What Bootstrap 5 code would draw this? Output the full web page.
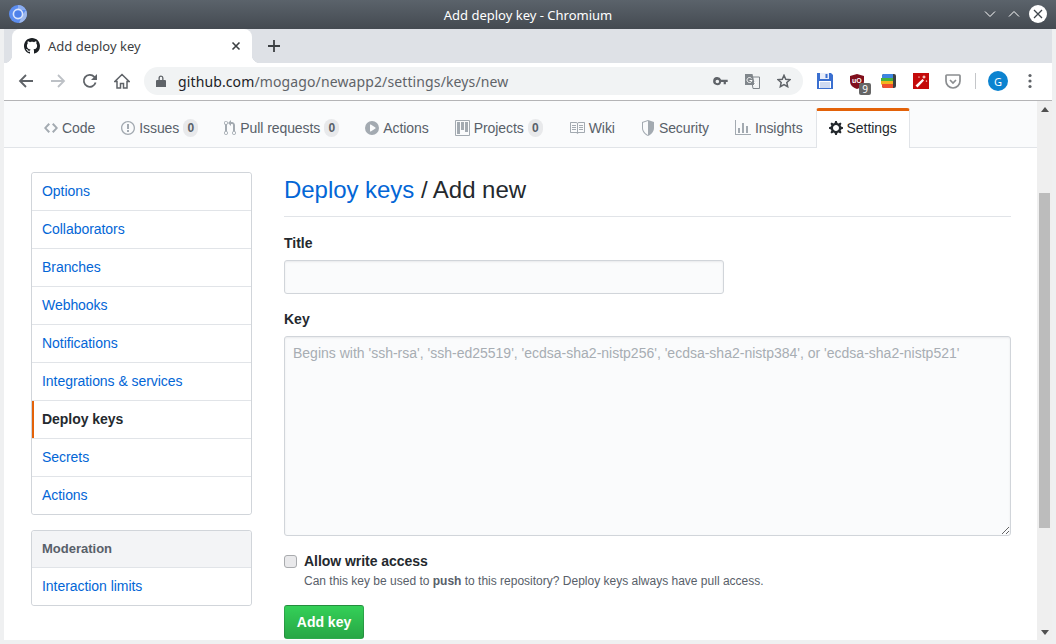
<!DOCTYPE html>
<html lang="en">
<head>
  <meta charset="UTF-8" />
  <meta name="viewport" content="width=device-width, initial-scale=1.0" />
  <title>Add deploy key - Chromium</title>
  <link href="https://cdn.jsdelivr.net/npm/bootstrap@5.3.0/dist/css/bootstrap.min.css" rel="stylesheet" />
  <style>
    html, body {
      height: 644px;
      overflow: hidden;
      background: #eff0f1;
    }
    body {
      font-family: "Liberation Sans", Arial, sans-serif;
      font-size: 14px;
      color: #24292e;
    }
    /* browser chrome */
    .title-row {
      height: 29px;
      background: linear-gradient(#5b636b, #444a51);
      color: #fff;
      font: 13px "Noto Sans", sans-serif;
    }
    .app-logo { left: 8px; top: 4px; }
    .win-btns { right: 6px; top: 4px; }
    .win-btn { width: 24px; height: 20px; }
    .shell { padding: 0 4px 4px; height: 615px; }
    .tab-row { height: 34px; background: #dee1e6; padding-left: 8px; }
    .tab-page {
      width: 240px;
      background: #fff;
      border-radius: 8px 8px 0 0;
      padding: 0 9px 0 12px;
      color: #3c4043;
      font: 13px "Noto Sans", sans-serif;
    }
    .tab-page::before, .tab-page::after {
      content: "";
      position: absolute;
      bottom: 0;
      width: 8px;
      height: 8px;
    }
    .tab-page::before { left: -8px; background: radial-gradient(circle at 0 0, transparent 8px, #fff 8.5px); }
    .tab-page::after { right: -8px; background: radial-gradient(circle at 100% 0, transparent 8px, #fff 8.5px); }
    .tab-title { margin-left: 8px; }
    .new-tab { margin-left: 14px; }
    .tool-row {
      height: 38px;
      background: #fff;
      border-bottom: 1px solid #b4b4b6;
      padding: 0 0 1px 6px;
    }
    .tool-btn { width: 32px; height: 32px; flex: none; }
    .omni {
      width: 659px;
      height: 28px;
      background: #f1f3f4;
      border-radius: 14px;
      margin: 0 6px;
      padding: 0 3px 0 10px;
      font: 14px "Noto Sans", sans-serif;
      letter-spacing: .12px;
      color: #5f6368;
    }
    .omni-host { color: #202124; }
    .omni-url { margin-left: 10px; }
    .tool-sep { width: 1px; height: 16px; background: #c4c6c9; margin: 0 6px 0 6px; }
    .avatar {
      width: 20px;
      height: 20px;
      border-radius: 50%;
      background: #0c83d0;
      color: #fff;
      font: 11px "Noto Sans", sans-serif;
    }
    .ublock-tag {
      left: 18px;
      top: 18px;
      width: 12px;
      height: 12px;
      background: #666;
      color: #fff;
      border-radius: 2px;
      font: 10px/12px "Noto Sans", sans-serif;
      text-align: center;
    }
    .ublock-mark { left: 11px; top: 11px; color: #fff; font: bold 7px/10px "Liberation Sans", sans-serif; }
    /* page */
    .view { height: 539px; }
    .page-pane { width: 1033px; background: #fff; overflow: hidden; }
    .repo-nav {
      height: 47px;
      background: #fafbfc;
      border-bottom: 1px solid #e1e4e8;
      padding: 7px 0 0 27px;
    }
    .repo-nav .nav-link {
      height: 40px;
      padding: 0 13px;
      color: #586069;
      font-size: 14px;
      letter-spacing: -.07px;
      gap: 4px;
    }
    .repo-nav svg { fill: #a3aab1; fill-rule: evenodd; }
    .repo-nav .nav-link.is-current {
      padding: 0 12px 3px;
      background: #fff;
      color: #24292e;
      border: 1px solid #e1e4e8;
      border-top: 3px solid #e36209;
      border-bottom: 0;
      border-radius: 3px 3px 0 0;
    }
    .repo-nav .is-current svg { fill: #24292e; }
    .count {
      min-width: 15px;
      height: 18px;
      padding: 0 4px;
      background: rgba(27, 31, 35, .08);
      border-radius: 9px;
      color: #586069;
      font-size: 12px;
      font-weight: 600;
      line-height: 18px;
      text-align: center;
    }
    .settings-wrap { padding: 24px 26px 0 27px; gap: 32px; }
    .side { width: 221px; flex: none; }
    .side-list { border: 1px solid #d1d5da; border-radius: 3px; margin-bottom: 15px; }
    .side-list .list-group-item {
      padding: 8px 10px;
      font-size: 14px;
      line-height: 21px;
      letter-spacing: -.05px;
      color: #0366d6;
      border-width: 0 0 1px;
      border-color: #e1e4e8;
    }
    .side-list .list-group-item:last-child { border-bottom: 0; }
    .side-list .is-current {
      font-weight: 600;
      color: #24292e;
      box-shadow: inset 2px 0 #e36209;
    }
    .side-list .side-head {
      padding: 7px 10px;
      height: 37px;
      background: #f3f4f6;
      color: #586069;
      font-size: 13px;
      letter-spacing: 0;
      font-weight: 600;
    }
    .main-col { width: 727px; }
    .sub-head {
      border-bottom: 1px solid #e1e4e8;
      padding-bottom: 8px;
      margin-bottom: 16px;
      font-size: 24px;
      line-height: 36px;
      font-weight: 400;
      letter-spacing: -.04px;
    }
    .sub-head a { color: #0366d6; text-decoration: none; }
    .field-label { font-weight: 600; font-size: 14px; line-height: 21px; margin-bottom: 6px; }
    .form-control.gh-input {
      background: #fafbfc;
      border: 1px solid #d1d5da;
      border-radius: 3px;
      font-size: 14px;
      color: #24292e;
      box-shadow: inset 0 1px 2px rgba(27, 31, 35, .075);
    }
    .gh-title { width: 440px; height: 34px; margin-bottom: 15px; }
    .gh-key { width: 727px; height: 200px; padding: 6px 8px; line-height: 20px; }
    .gh-key::placeholder { color: #a7adb3; opacity: 1; }
    .write-check { margin: 17px 0 0; padding-left: 20px; min-height: 0; }
    .write-check .form-check-input {
      width: 13px;
      height: 13px;
      margin: 2px 0 0 -20px;
      background-color: #e9e9eb;
      border: 1px solid #a9abae;
      border-radius: 3px;
    }
    .write-check label { font-weight: 600; line-height: 17px; display: block; letter-spacing: -.04px; }
    .write-hint { font-size: 12px; color: #586069; line-height: 18px; margin-top: 2px; }
    .write-hint b { font-weight: 600; }
    .btn.add-btn {
      margin-top: 15px;
      width: 80px;
      height: 34px;
      padding: 0;
      border: 1px solid rgba(27, 31, 35, .2);
      border-radius: 3px;
      background: linear-gradient(#34d058, #28a745);
      color: #fff;
      font-size: 14px;
      font-weight: 600;
    }
    .scroll-rail {
      width: 15px;
      flex: none;
      background: #efefef;
      padding-top: 6px;
    }
    .scroll-thumb { width: 11px; height: 335px; margin: 81px 2px 102px; background: #bcbcbc; }
    .scroll-up, .scroll-down { display: block; margin: 0 auto; }
  </style>
</head>
<body>
  <div class="title-row position-relative d-flex align-items-center justify-content-center">
    <svg class="app-logo position-absolute" width="20" height="20" viewBox="0 0 20 20">
      <circle cx="10" cy="10" r="9" fill="#5c8def" />
      <path d="M10 1a9 9 0 0 1 8 5h-8z" fill="#8badf0" />
      <path d="M18 6a9 9 0 0 1-7 13l3-7z" fill="#9db7ea" />
      <circle cx="10" cy="10" r="4.6" fill="none" stroke="#dbe5fb" stroke-width="1.6" />
      <circle cx="10" cy="10" r="3.2" fill="#4e81ea" />
    </svg>
    <span>Add deploy key - Chromium</span>
    <div class="win-btns position-absolute d-flex align-items-center">
      <div class="win-btn d-flex align-items-center justify-content-center">
        <svg width="12" height="8" viewBox="0 0 12 8"><path d="M1 1.5l5 5 5-5" fill="none" stroke="#fff" /></svg>
      </div>
      <div class="win-btn d-flex align-items-center justify-content-center">
        <svg width="12" height="8" viewBox="0 0 12 8"><path d="M1 6.5l5-5 5 5" fill="none" stroke="#fff" /></svg>
      </div>
      <div class="win-btn d-flex align-items-center justify-content-center">
        <svg width="18" height="18" viewBox="0 0 18 18"><circle cx="9" cy="9" r="9" fill="#fff" /><path d="M5 5l8 8M13 5l-8 8" stroke="#3f454b" stroke-width="1.3" /></svg>
      </div>
    </div>
  </div>

  <div class="shell">
    <div class="tab-row d-flex align-items-center">
      <div class="tab-page position-relative d-flex align-items-center align-self-stretch">
        <svg width="16" height="16" viewBox="0 0 16 16" fill="#1b1f23"><path d="M8 0C3.58 0 0 3.58 0 8c0 3.54 2.29 6.53 5.47 7.59.4.07.55-.17.55-.38 0-.19-.01-.82-.01-1.49-2.01.37-2.53-.49-2.69-.94-.09-.23-.48-.94-.82-1.13-.28-.15-.68-.52-.01-.53.63-.01 1.08.58 1.23.82.72 1.21 1.87.87 2.33.66.07-.52.28-.87.51-1.07-1.78-.2-3.64-.89-3.64-3.95 0-.87.31-1.59.82-2.15-.08-.2-.36-1.02.08-2.12 0 0 .67-.21 2.2.82.64-.18 1.32-.27 2-.27.68 0 1.36.09 2 .27 1.53-1.04 2.2-.82 2.2-.82.44 1.1.16 1.92.08 2.12.51.56.82 1.27.82 2.15 0 3.07-1.87 3.75-3.65 3.95.29.25.54.73.54 1.48 0 1.07-.01 1.93-.01 2.2 0 .21.15.46.55.38A8.013 8.013 0 0016 8c0-4.42-3.58-8-8-8z" /></svg>
        <span class="tab-title flex-grow-1">Add deploy key</span>
        <svg width="14" height="14" viewBox="0 0 14 14"><path d="M3.5 3.5l7 7M10.5 3.5l-7 7" stroke="#3c4043" stroke-width="1.6" /></svg>
      </div>
      <svg class="new-tab" width="16" height="16" viewBox="0 0 16 16"><path d="M8 2v12M2 8h12" stroke="#3c4043" stroke-width="1.8" /></svg>
    </div>

    <div class="tool-row d-flex align-items-center">
      <div class="tool-btn d-flex align-items-center justify-content-center">
        <svg width="16" height="16" viewBox="0 0 16 16"><path d="M15 8H2M8 2L2 8l6 6" fill="none" stroke="#5f6368" stroke-width="1.8" /></svg>
      </div>
      <div class="tool-btn d-flex align-items-center justify-content-center">
        <svg width="16" height="16" viewBox="0 0 16 16"><path d="M1 8h13M8 2l6 6-6 6" fill="none" stroke="#bdc1c6" stroke-width="1.8" /></svg>
      </div>
      <div class="tool-btn d-flex align-items-center justify-content-center">
        <svg width="16" height="16" viewBox="0 0 16 16"><path d="M13.6 9.5A6 6 0 1 1 12.3 3.8L14.5 6" fill="none" stroke="#5f6368" stroke-width="1.8" /><path d="M15 1v6H9z" fill="#5f6368" /></svg>
      </div>
      <div class="tool-btn d-flex align-items-center justify-content-center">
        <svg width="16" height="16" viewBox="0 0 16 16"><path d="M8 1.500L.9 8.500H3V15h3.500v-4.500h3V15H13V8.500h2.100z" fill="none" stroke="#5f6368" stroke-width="1.500" /></svg>
      </div>
      <div class="omni d-flex align-items-center">
        <svg width="14" height="14" viewBox="0 0 14 14" fill="#5f6368"><path d="M3 6h8a1 1 0 0 1 1 1v6H2V7a1 1 0 0 1 1-1zM4.500 6V4a2.500 2.500 0 0 1 5 0v2H8.200V4a1.200 1.200 0 0 0-2.400 0v2z" /></svg>
        <span class="omni-url flex-grow-1"><span class="omni-host">github.com</span>/mogago/newapp2/settings/keys/new</span>
        <div class="tool-btn d-flex align-items-center justify-content-center">
          <svg width="15" height="9" viewBox="0 0 16 10" fill="#5f6368"><path d="M4.500 0a4.500 4.500 0 0 1 4.200 3H16v2.500h-2V8h-2.500V5.500H8.700A4.500 4.500 0 1 1 4.500 0zm0 3a2 2 0 1 0 0 4 2 2 0 0 0 0-4z" /></svg>
        </div>
        <div class="tool-btn d-flex align-items-center justify-content-center">
          <svg width="16" height="16" viewBox="0 0 16 16"><path d="M7 4h8.500v11.500H9z" fill="#f1f3f4" stroke="#80868b" /><path d="M1 1h7.500L11 12H1z" fill="#80868b" /><path d="M7.500 5.500A2.500 2.500 0 1 0 8 7.500H5.500M10 9l3 3.500M13 9l-3.500 3.500" fill="none" stroke="#fff" /></svg>
        </div>
        <div class="tool-btn d-flex align-items-center justify-content-center">
          <svg width="14" height="14" viewBox="0 0 16 16"><path d="M8 1.500l2 4.500 4.800.5-3.600 3.200 1 4.800L8 12l-4.200 2.500 1-4.800L1.200 6.500 6 6z" fill="none" stroke="#5f6368" stroke-width="1.700" /></svg>
        </div>
      </div>
      <div class="tool-btn d-flex align-items-center justify-content-center">
        <svg width="16" height="16" viewBox="0 0 16 16"><path d="M0 0h14l2 2v14H0z" fill="#3a6fd0" /><path d="M3 0h9v6H3z" fill="#e9eefa" /><path d="M8.500 1h2v4h-2z" fill="#3a6fd0" /><path d="M2 8h12v7H2z" fill="#fff" /><path d="M3 10h10M3 12h10M3 14h10" stroke="#9db5e4" /></svg>
      </div>
      <div class="tool-btn position-relative">
        <svg class="position-absolute top-0 start-0" width="32" height="32" viewBox="0 0 32 32"><path d="M16 9l7 2v5c0 5-4 7-7 8-3-1-7-3-7-8v-5z" fill="#800f1d" /></svg>
        <span class="ublock-mark position-absolute">uO</span>
        <span class="ublock-tag position-absolute">9</span>
      </div>
      <div class="tool-btn d-flex align-items-center justify-content-center">
        <svg width="16" height="16" viewBox="0 0 16 16"><rect x="1" y="1" width="14" height="14" rx="2" fill="#3d4043" /><path d="M1 3a2 2 0 0 1 2-2h9v4H1z" fill="#3d85e0" /><path d="M0 5h12v4H0z" fill="#46b13c" /><path d="M0 8h12v3.500H0z" fill="#f2b51e" /><path d="M1 11h11v4H3a2 2 0 0 1-2-2z" fill="#ef4f2f" /></svg>
      </div>
      <div class="tool-btn d-flex align-items-center justify-content-center">
        <svg width="16" height="16" viewBox="0 0 16 16"><rect width="16" height="16" fill="#c40a0a" /><path d="M2.500 12.500l7-6.500 1.500 1.500-6.500 7z" fill="#fff" /><path d="M11 2l.7 1.300L13 4l-1.300.7L11 6l-.7-1.300L9 4l1.300-.7zM6 3l.4.800L7 4l-.6.400L6 5l-.4-.6L5 4l.6-.2zM13.500 7l.4.800.600.200-.600.400-.4.600-.4-.600L12.500 8l.600-.2z" fill="#ffd9d0" /></svg>
      </div>
      <div class="tool-btn d-flex align-items-center justify-content-center">
        <svg width="16" height="15" viewBox="0 0 16 15"><path d="M1.800 1h12.400a.8.800 0 0 1 .8.800V7a7 7 0 0 1-14 0V1.800A.8.800 0 0 1 1.800 1z" fill="none" stroke="#8a8d90" stroke-width="1.700" /><path d="M5 6l3 3 3-3" fill="none" stroke="#8a8d90" stroke-width="1.700" /></svg>
      </div>
      <div class="tool-sep"></div>
      <div class="tool-btn d-flex align-items-center justify-content-center">
        <div class="avatar d-flex align-items-center justify-content-center">G</div>
      </div>
      <div class="tool-btn d-flex align-items-center justify-content-center">
        <svg width="4" height="16" viewBox="0 0 4 16" fill="#5f6368"><circle cx="2" cy="2.500" r="1.600" /><circle cx="2" cy="8" r="1.600" /><circle cx="2" cy="13.500" r="1.600" /></svg>
      </div>
    </div>

    <div class="view d-flex">
      <div class="page-pane">
        <nav class="repo-nav nav flex-nowrap align-items-start">
          <a class="nav-link d-flex align-items-center" href="#">
            <svg width="14" height="16" viewBox="0 0 14 16"><path d="M9.500 3L8 4.500 11.500 8 8 11.500 9.500 13 14 8 9.500 3zm-5 0L0 8l4.500 5L6 11.500 2.500 8 6 4.500 4.500 3z" /></svg>
            Code
          </a>
          <a class="nav-link d-flex align-items-center" href="#">
            <svg width="14" height="16" viewBox="0 0 14 16"><path d="M7 2.300c3.140 0 5.700 2.560 5.700 5.700s-2.560 5.700-5.700 5.700A5.710 5.710 0 011.300 8c0-3.140 2.560-5.700 5.700-5.700zM7 1C3.140 1 0 4.140 0 8s3.140 7 7 7 7-3.140 7-7-3.140-7-7-7zm1 3H6v5h2V4zm0 6H6v2h2v-2z" /></svg>
            Issues <span class="count">0</span>
          </a>
          <a class="nav-link d-flex align-items-center" href="#">
            <svg width="12" height="16" viewBox="0 0 12 16"><path d="M11 11.280V5c-.03-.78-.34-1.470-.94-2.060C9.460 2.350 8.780 2.030 8 2H7V0L4 3l3 3V4h1c.27.02.48.11.69.31.21.2.3.42.31.69v6.280A1.993 1.993 0 0010 15a1.993 1.993 0 001-3.720zm-1 2.920c-.66 0-1.200-.55-1.200-1.200 0-.65.55-1.200 1.200-1.200.65 0 1.200.55 1.200 1.200 0 .65-.55 1.200-1.200 1.200zM4 3c0-1.110-.89-2-2-2a1.993 1.993 0 00-1 3.720v6.560A1.993 1.993 0 002 15a1.993 1.993 0 001-3.720V4.720c.59-.34 1-.98 1-1.720zm-.8 10c0 .66-.55 1.200-1.200 1.200-.65 0-1.200-.55-1.200-1.200 0-.65.55-1.200 1.200-1.200.65 0 1.200.55 1.200 1.200zM2 4.200C1.340 4.200.8 3.650.8 3c0-.65.55-1.200 1.200-1.200.65 0 1.200.55 1.200 1.200 0 .65-.55 1.200-1.200 1.200z" /></svg>
            Pull requests <span class="count">0</span>
          </a>
          <a class="nav-link d-flex align-items-center" href="#">
            <svg width="14" height="16" viewBox="0 0 14 16"><path d="M14 8A7 7 0 110 8a7 7 0 0114 0zm-8.223 3.482l4.599-3.066a.5.5 0 000-.832L5.777 4.518A.5.5 0 005 4.934v6.132a.5.5 0 00.777.416z" /></svg>
            Actions
          </a>
          <a class="nav-link d-flex align-items-center" href="#">
            <svg width="15" height="16" viewBox="0 0 15 16"><path d="M10 12h3V2h-3v10zm-4-2h3V2H6v8zm-4 4h3V2H2v12zm-1 1h13V1H1v14zM14 0H1a1 1 0 00-1 1v14a1 1 0 001 1h13a1 1 0 001-1V1a1 1 0 00-1-1z" /></svg>
            Projects <span class="count">0</span>
          </a>
          <a class="nav-link d-flex align-items-center" href="#">
            <svg width="16" height="16" viewBox="0 0 16 16"><path d="M3 5h4v1H3V5zm0 3h4V7H3v1zm0 2h4V9H3v1zm11-5h-4v1h4V5zm0 2h-4v1h4V7zm0 2h-4v1h4V9zm2-6v9c0 .55-.45 1-1 1H9.500l-1 1-1-1H2c-.55 0-1-.45-1-1V3c0-.55.45-1 1-1h5.500l1 1 1-1H15c.55 0 1 .45 1 1zm-8 .5L7.500 3H2v9h6V3.500zm7-.5H9.500l-.5.5V12h6V3z" /></svg>
            Wiki
          </a>
          <a class="nav-link d-flex align-items-center" href="#">
            <svg width="14" height="16" viewBox="0 0 14 16"><path d="M7 0L1 2v6c0 4 3.500 7 6 8 2.500-1 6-4 6-8V2L7 0zm0 1.100L2 2.800V8c0 3.300 2.900 5.900 5 6.900V1.100z" /></svg>
            Security
          </a>
          <a class="nav-link d-flex align-items-center" href="#">
            <svg width="16" height="16" viewBox="0 0 16 16"><path d="M16 14v1H0V0h1v14h15zM5 13H3V8h2v5zm4 0H7V3h2v10zm4 0h-2V6h2v7z" /></svg>
            Insights
          </a>
          <a class="nav-link is-current d-flex align-items-center" href="#">
            <svg width="14" height="16" viewBox="0 0 14 16"><path d="M14 8.770v-1.600l-1.940-.64-.45-1.090.88-1.840-1.130-1.130-1.810.91-1.090-.45-.69-1.920h-1.600l-.63 1.940-1.110.45-1.840-.88-1.130 1.130.91 1.810-.45 1.090L0 7.230v1.590l1.940.64.45 1.090-.88 1.840 1.130 1.130 1.810-.91 1.090.45.69 1.920h1.590l.63-1.940 1.110-.45 1.840.88 1.130-1.130-.92-1.810.47-1.090L14 8.750v.02zM7 11c-1.660 0-3-1.340-3-3s1.340-3 3-3 3 1.340 3 3-1.340 3-3 3z" /></svg>
            Settings
          </a>
        </nav>

        <div class="settings-wrap d-flex">
          <div class="side">
            <div class="list-group side-list">
              <a class="list-group-item" href="#">Options</a>
              <a class="list-group-item" href="#">Collaborators</a>
              <a class="list-group-item" href="#">Branches</a>
              <a class="list-group-item" href="#">Webhooks</a>
              <a class="list-group-item" href="#">Notifications</a>
              <a class="list-group-item" href="#">Integrations &amp; services</a>
              <a class="list-group-item is-current" href="#">Deploy keys</a>
              <a class="list-group-item" href="#">Secrets</a>
              <a class="list-group-item" href="#">Actions</a>
            </div>
            <div class="list-group side-list">
              <div class="list-group-item side-head">Moderation</div>
              <a class="list-group-item" href="#">Interaction limits</a>
            </div>
          </div>

          <div class="main-col">
            <h2 class="sub-head"><a href="#">Deploy keys</a> / Add new</h2>
            <form onsubmit="return false">
              <div class="field-label">Title</div>
              <input class="form-control gh-input gh-title" type="text" />
              <div class="field-label">Key</div>
              <textarea class="form-control gh-input gh-key" placeholder="Begins with 'ssh-rsa', 'ssh-ed25519', 'ecdsa-sha2-nistp256', 'ecdsa-sha2-nistp384', or 'ecdsa-sha2-nistp521'"></textarea>
              <div class="form-check write-check">
                <input class="form-check-input" type="checkbox" id="write-access" />
                <label for="write-access">Allow write access</label>
                <div class="write-hint">Can this key be used to <b>push</b> to this repository? Deploy keys always have pull access.</div>
              </div>
              <button class="btn add-btn" type="submit">Add key</button>
            </form>
          </div>
        </div>
      </div>

      <div class="scroll-rail">
        <svg class="scroll-up" width="8" height="5" viewBox="0 0 8 5" fill="#505050"><path d="M4 0l4 5H0z" /></svg>
        <div class="scroll-thumb"></div>
        <svg class="scroll-down" width="8" height="5" viewBox="0 0 8 5" fill="#505050"><path d="M4 5L0 0h8z" /></svg>
      </div>
    </div>
  </div>
  <script src="https://cdn.jsdelivr.net/npm/bootstrap@5.3.0/dist/js/bootstrap.bundle.min.js"></script>
</body>
</html>
